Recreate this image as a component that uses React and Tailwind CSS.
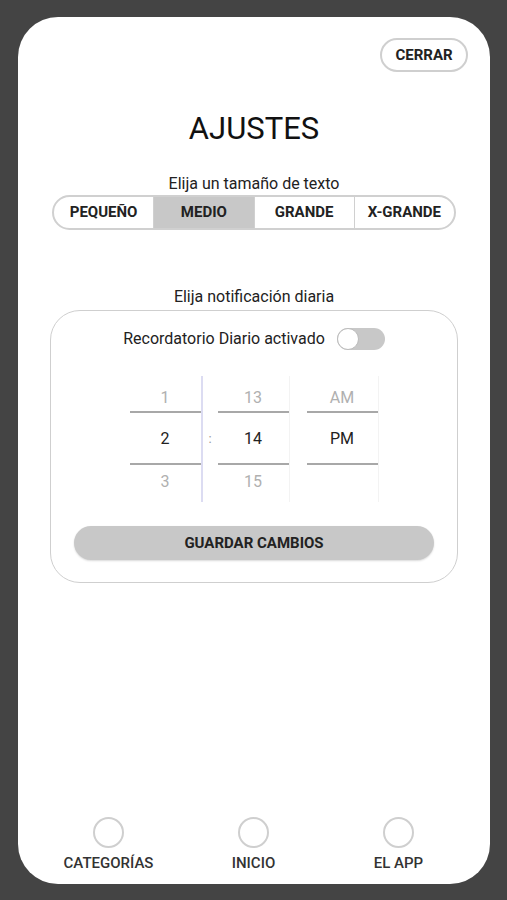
import React from 'react';

const sizes = ['PEQUEÑO', 'MEDIO', 'GRANDE', 'X-GRANDE'];
const navItems = ['CATEGORÍAS', 'INICIO', 'EL APP'];

function PickerColumn({ top, mid, bottom }) {
  return (
    <div className="relative flex w-[71px] flex-col">
      <div className="flex h-[35px] items-center justify-center pt-[8px] text-[16px] text-[#b0b0b0]">{top}</div>
      <div className="h-[2px] bg-[#a8a8a8]" />
      <div className="flex h-[50px] items-center justify-center pt-[2px] text-[16px] text-[#222]">{mid}</div>
      <div className="h-[2px] bg-[#a8a8a8]" />
      <div className="flex h-[37px] items-center justify-center pb-[4px] text-[16px] text-[#b0b0b0]">{bottom}</div>
    </div>
  );
}

export default function App() {
  return (
    <div className="min-h-[900px] bg-[#444444] pl-[18px] pr-[17px] pt-[17px]" style={{ fontFamily: 'Roboto, "Liberation Sans", sans-serif' }}>
      <div className="flex h-[867px] flex-col rounded-[40px] bg-white">
        {/* Close */}
        <div className="flex justify-end pr-[22px] pt-[21px]">
          <button className="flex h-[34px] w-[88px] items-center justify-center rounded-full border-2 border-[#cfcfcf] text-[15px] font-bold text-[#222]">
            CERRAR
          </button>
        </div>

        <h1 className="mt-[38px] text-center text-[31px] leading-[38px] text-[#111]">AJUSTES</h1>

        <p className="mt-[26px] text-center text-[16px] leading-[20px] text-[#222]">Elija un tamaño de texto</p>
        <div className="mx-[34px] mt-[1px] flex h-[35px] overflow-hidden rounded-full border-2 border-[#d0d0d0]">
          {sizes.map((s, i) => (
            <div
              key={s}
              className={`flex flex-1 items-center justify-center text-[15px] font-bold text-[#222] ${i > 0 ? 'border-l border-[#d0d0d0]' : ''} ${s === 'MEDIO' ? 'bg-[#c8c8c8]' : ''}`}
            >
              {s}
            </div>
          ))}
        </div>

        <p className="mt-[57px] text-center text-[16px] leading-[20px] text-[#222]">Elija notificación diaria</p>
        <div className="mx-[32px] mt-[3px] flex flex-col rounded-[30px] border-[1.5px] border-[#cfcfcf] pb-[22px] pt-[16px]">
          <div className="flex h-[24px] items-center justify-center gap-[12px]">
            <span className="text-[16px] text-[#222]">Recordatorio Diario activado</span>
            <div className="relative h-[22px] w-[48px] rounded-full bg-[#c8c8c8]">
              <div className="absolute left-0 top-0 h-[22px] w-[22px] rounded-full border border-[#bbb] bg-white" />
            </div>
          </div>

          <div className="mt-[25px] flex justify-center">
            <PickerColumn top="1" mid="2" bottom="3" />
            <div className="w-[2px] bg-[#dcdcf2]" />
            <div className="flex w-[15px] items-center justify-center text-[13px] text-[#999]">:</div>
            <PickerColumn top="13" mid="14" bottom="15" />
            <div className="w-px bg-[#f3f3f3]" />
            <div className="w-[17px]" />
            <PickerColumn top="AM" mid="PM" bottom="" />
            <div className="w-px bg-[#f3f3f3]" />
          </div>

          <button className="mx-[23px] mt-[24px] flex h-[34px] items-center justify-center rounded-full bg-[#c8c8c8] text-[15px] font-bold text-[#222] shadow-[0_1px_2px_rgba(0,0,0,0.15)]">
            GUARDAR CAMBIOS
          </button>
        </div>

        {/* Bottom nav */}
        <nav className="mt-auto grid grid-cols-3 pb-[12px] pl-[18px] pr-[19px]">
          {navItems.map((n) => (
            <div key={n} className="flex flex-col items-center">
              <div className="h-[31px] w-[31px] rounded-full border-2 border-[#cfcfcf]" />
              <span className="mt-[7px] text-[15px] font-medium leading-[17px] text-[#333]">{n}</span>
            </div>
          ))}
        </nav>
      </div>
    </div>
  );
}
